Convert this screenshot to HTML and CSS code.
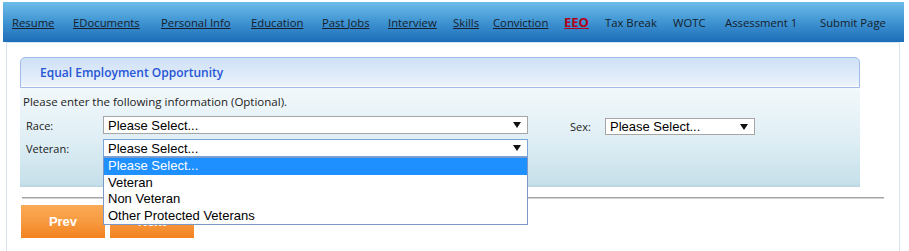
FILE: index.html
```html
<!DOCTYPE html>
<html lang="en">
<head>
    <meta charset="UTF-8">
    <meta name="viewport" content="width=device-width, initial-scale=1.0">
    <title>EEO</title>
    <link rel="stylesheet" href="styles.css">
</head>
<body>
    <nav class="topnav">
        <a class="nav-link" href="#">Resume</a>
        <a class="nav-link" href="#">EDocuments</a>
        <a class="nav-link" href="#">Personal Info</a>
        <a class="nav-link" href="#">Education</a>
        <a class="nav-link" href="#">Past Jobs</a>
        <a class="nav-link" href="#">Interview</a>
        <a class="nav-link" href="#">Skills</a>
        <a class="nav-link" href="#">Conviction</a>
        <a class="nav-link current" href="#">EEO</a>
        <span class="nav-item">Tax Break</span>
        <span class="nav-item">WOTC</span>
        <span class="nav-item">Assessment 1</span>
        <span class="nav-item">Submit Page</span>
    </nav>

    <div class="content">
        <div class="panel">
            <div class="panel-head">Equal Employment Opportunity</div>
            <div class="panel-body">
                <p class="intro">Please enter the following information (Optional).</p>

                <div class="field-row">
                    <label class="field-label">Race:</label>
                    <div class="select select-wide">
                        <span>Please Select...</span>
                        <svg class="arrow" width="8" height="6" viewBox="0 0 8 6"><polygon points="0,0 8,0 4,6" fill="#111"/></svg>
                    </div>
                    <label class="field-label sex-label">Sex:</label>
                    <div class="select select-short">
                        <span>Please Select...</span>
                        <svg class="arrow" width="8" height="6" viewBox="0 0 8 6"><polygon points="0,0 8,0 4,6" fill="#111"/></svg>
                    </div>
                </div>

                <div class="field-row">
                    <label class="field-label">Veteran:</label>
                    <div class="select-wrap">
                        <div class="select select-wide focused">
                            <span>Please Select...</span>
                            <svg class="arrow" width="8" height="6" viewBox="0 0 8 6"><polygon points="0,0 8,0 4,6" fill="#111"/></svg>
                        </div>
                        <ul class="dropdown">
                            <li class="selected">Please Select...</li>
                            <li>Veteran</li>
                            <li>Non Veteran</li>
                            <li>Other Protected Veterans</li>
                        </ul>
                    </div>
                </div>
            </div>
        </div>

        <div class="divider"></div>

        <div class="buttons">
            <button class="btn">Prev</button>
            <button class="btn">Next</button>
        </div>
    </div>
</body>
</html>
```

FILE: styles.css
```css
html, body {
    margin: 0;
    padding: 0;
    background: #fff;
    overflow: hidden;
}

body {
    font-family: "Open Sans", "Noto Sans", sans-serif;
    color: #222;
}

/* top step bar - columns follow the original table cells */
.topnav {
    margin: 2px 5px 0 3px;
    height: 40px;
    display: grid;
    grid-template-columns: 61px 88px 90px 71px 66px 65px 40px 71px 41px 68px 52px 95px auto;
    align-items: center;
    padding-left: 9px;
    background: linear-gradient(to bottom, #6dbde9 0%, #3f94d2 50%, #1d6db7 100%);
    font-size: 11.3px;
    white-space: nowrap;
}

.nav-link {
    color: #17202c;
    text-decoration: underline;
}

.nav-link.current {
    color: #b0001a;
    font-weight: bold;
    font-size: 13px;
}

.nav-item {
    color: #16202a;
}

.content {
    margin: 0 9px 0 6px;
    height: 209px;
    box-sizing: border-box;
    border: 1px solid #d6e3f2;
    border-bottom: none;
}

.panel {
    margin: 14px 0 0 13px;
    width: 840px;
}

.panel-head {
    height: 31px;
    box-sizing: border-box;
    border: 1px solid #9fbde6;
    border-radius: 5px 5px 0 0;
    padding-left: 19px;
    line-height: 29px;
    background: linear-gradient(to bottom, #cfe1f7 0%, #dfebf9 60%, #eef5fc 100%);
    box-shadow: inset 0 -1px 0 #fff;
    color: #2656d6;
    font-size: 12px;
    font-weight: 600;
}

.panel-body {
    height: 99px;
    box-sizing: border-box;
    padding: 6px 0 0 6px;
    background: linear-gradient(to bottom, #f2f8fb 0%, #e0eff5 50%, #c6e0ea 97%, #b8d4df 100%);
    font-size: 11px;
}

.intro {
    margin: 0 0 6px -3px;
    line-height: 16px;
    font-size: 11.5px;
}

.field-row {
    display: flex;
    align-items: flex-start;
    height: 18px;
    margin-bottom: 5px;
}

.field-label {
    width: 77px;
    line-height: 20px;
}

.sex-label {
    width: 35px;
    margin-left: 42px;
    line-height: 22px;
}

.select {
    height: 18px;
    box-sizing: border-box;
    border: 1px solid #a6a6a6;
    background: #fff;
    display: flex;
    align-items: center;
    justify-content: space-between;
    padding: 0 6px 0 4px;
    font-family: "Liberation Sans", Arial, sans-serif;
    font-size: 13px;
    color: #000;
}

.select-wide {
    width: 425px;
}

.select-short {
    width: 150px;
    height: 17px;
    margin-top: 2px;
}

.select.focused {
    border-color: #7ba4d9;
}

.select-wrap {
    position: relative;
}

.dropdown {
    position: absolute;
    top: 100%;
    left: 0;
    width: 425px;
    box-sizing: border-box;
    margin: 0;
    padding: 0;
    list-style: none;
    background: #fff;
    border: 1px solid #7b98c9;
    font-family: "Liberation Sans", Arial, sans-serif;
    font-size: 13px;
    color: #000;
    z-index: 2;
}

.dropdown li {
    height: 16.5px;
    line-height: 16.5px;
    padding-left: 4px;
}

.dropdown li.selected {
    background: #1e90ff;
    color: #fff;
}

.divider {
    margin: 10px 15px 0 15px;
    height: 0;
    border-top: 1px solid #a3a3a3;
    border-bottom: 1px solid #d2d2d2;
}

.buttons {
    display: flex;
    gap: 5px;
    margin: 6px 0 0 14px;
}

.btn {
    width: 84px;
    height: 33px;
    border: none;
    padding: 0;
    background: linear-gradient(to bottom, #fbab57 0%, #f79a40 50%, #f2821f 100%);
    color: #fff;
    font-family: "Liberation Sans", Arial, sans-serif;
    font-weight: bold;
    font-size: 13px;
}
```
